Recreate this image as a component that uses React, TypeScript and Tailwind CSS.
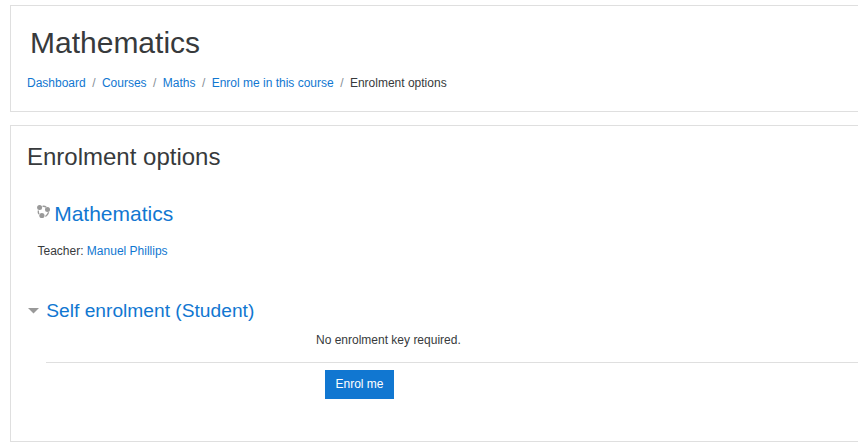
import React from "react";

const crumbs = ["Dashboard", "Courses", "Maths", "Enrol me in this course"];

export default function App() {
  return (
    <div className="h-[447px] w-full overflow-hidden bg-white pl-[10px] pt-[5px] font-['Liberation_Sans',Arial,sans-serif] text-[12px] leading-[18px] text-[#373a3c]">
      <header className="h-[107px] border border-r-0 border-[#dfdfdf] pl-4 pt-[19px]">
        <h1 className="pl-[3px] text-[30px] leading-[36px]">Mathematics</h1>
        <nav className="mt-[13px] flex">
          {crumbs.map((c) => (
            <React.Fragment key={c}>
              <a className="text-[#1177d1]">{c}</a>
              <span className="px-[6.43px] text-[#868e96]">/</span>
            </React.Fragment>
          ))}
          <span>Enrolment options</span>
        </nav>
      </header>
      <main className="mt-[13px] h-[317px] border border-r-0 border-[#dfdfdf] pl-4 pt-[17px]">
        <h2 className="text-[24px] leading-[28px]">Enrolment options</h2>
        <div className="mt-[31px] flex pl-[10px]">
          <svg className="mt-[3px] h-[14px] w-[14px]" viewBox="0 0 14 14">
            <path d="M5.500 1.300Q7.800 1 9.300 2.200M1.300 5.500Q1 7.500 2 9.200M11.600 7.300Q10.800 10 8.400 11.500" fill="none" stroke="#999" strokeWidth="1.300" />
            <circle cx="2.600" cy="2.600" r="2.500" fill="#999" />
            <circle cx="10.500" cy="4.600" r="2.500" fill="#999" />
            <circle cx="4.900" cy="10.500" r="2.600" fill="#999" />
          </svg>
          <h3 className="ml-[3.2px] text-[21px] leading-[24px] text-[#1177d1]">Mathematics</h3>
        </div>
        <p className="mt-[16px] pl-[10.5px]">
          Teacher: <a className="text-[#1177d1]">Manuel Phillips</a>
        </p>
        <div className="mt-[39px] flex">
          <svg className="mt-[9px] h-[6px] w-[12px]" viewBox="0 0 12 6">
            <path d="M1 0h11L6.500 5.500z" fill="#999" />
          </svg>
          <h3 className="ml-[7.3px] text-[19.2px] leading-[24px] text-[#1177d1]">Self enrolment (Student)</h3>
        </div>
        <p className="mt-[8px] pl-[289px]">No enrolment key required.</p>
        <div className="ml-[19px] mt-[13px] border-t border-[#dfdfdf] pl-[279px] pt-[7px]">
          <button className="block h-[29px] w-[69px] bg-[#1177d1] pb-[2px] text-white">Enrol me</button>
        </div>
      </main>
    </div>
  );
}
